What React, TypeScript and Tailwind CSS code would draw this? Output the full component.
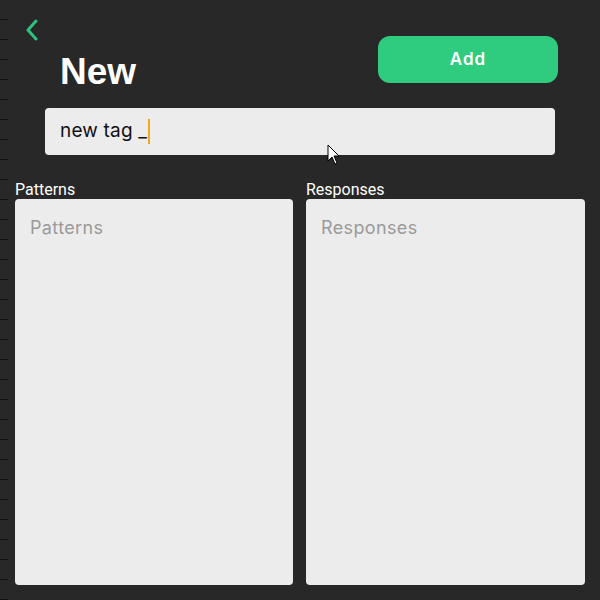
import React from "react";

const ticks = Array.from({ length: 30 }, (_, i) => i);

function Ruler() {
  return (
    <div className="absolute left-0 top-0 flex flex-col">
      {ticks.map((i) => (
        <div key={i} className="h-[20px] w-[8px] border-b border-[#111]" />
      ))}
    </div>
  );
}

function Pointer() {
  return (
    <svg className="absolute left-[327px] top-[144px]" width="14" height="22" viewBox="0 0 14 22">
      <path d="M1 1 L1 17 L5 13 L8 20 L10 19 L7 12 L12 12 Z" fill="#fff" stroke="#000" strokeWidth="1" strokeLinejoin="round" />
    </svg>
  );
}

export default function App() {
  return (
    <div className="relative h-[600px] w-[600px] overflow-hidden bg-[#282828]">
      <Ruler />

      <div className="flex">
        <div className="flex flex-col">
          <button className="ml-[24px] mt-[19px] h-[22px] w-[16px]">
            <svg width="16" height="22" viewBox="0 0 16 22">
              <polyline points="12,2 4,11 12,20" fill="none" stroke="#2ec27e" strokeWidth="3" strokeLinecap="round" strokeLinejoin="round" />
            </svg>
          </button>
          <h1 className="ml-[60px] mt-[11px] text-[37px] font-bold leading-[40px] text-white" style={{ fontFamily: "'Liberation Sans', Arial, sans-serif" }}>
            New
          </h1>
        </div>
        <button
          className="ml-auto mr-[42px] mt-[36px] h-[47px] w-[180px] rounded-[12px] bg-[#2fcb7f] text-[17px] font-semibold tracking-[0.06em] text-white"
          style={{ fontFamily: "Inter, sans-serif" }}
        >
          Add
        </button>
      </div>

      <div className="ml-[45px] mt-[16px] flex h-[47px] w-[510px] items-center rounded-[4px] bg-[#ececec] pl-[15px]">
        <span className="text-[19px] tracking-[0.01em] text-[#111]" style={{ fontFamily: "Inter, sans-serif" }}>
          new tag _
        </span>
        <span className="ml-[1px] h-[25px] w-[2px] bg-[#f5a623]" />
      </div>

      <div className="mt-[26px] flex gap-[13px] pl-[15px]" style={{ fontFamily: "Roboto, sans-serif" }}>
        <div className="flex w-[278px] flex-col">
          <span className="text-[16px] leading-[18px] text-white">Patterns</span>
          <div className="h-[386px] rounded-[4px] bg-[#ececec] px-[15px] pt-[15px]">
            <span className="text-[18px] tracking-[0.02em] text-[#9a9a9a]" style={{ fontFamily: "Inter, sans-serif" }}>
              Patterns
            </span>
          </div>
        </div>
        <div className="flex w-[279px] flex-col">
          <span className="text-[16px] leading-[18px] text-white">Responses</span>
          <div className="h-[386px] rounded-[4px] bg-[#ececec] px-[15px] pt-[15px]">
            <span className="text-[18px] tracking-[0.02em] text-[#9a9a9a]" style={{ fontFamily: "Inter, sans-serif" }}>
              Responses
            </span>
          </div>
        </div>
      </div>

      <Pointer />
    </div>
  );
}
